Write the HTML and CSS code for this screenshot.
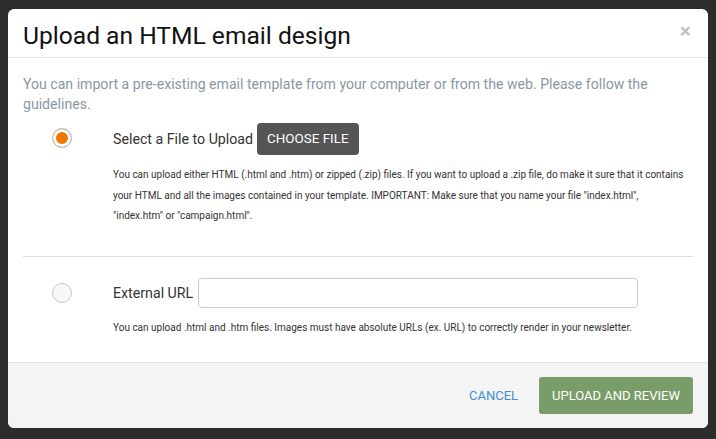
FILE: index.html
```html
<!DOCTYPE html>
<html>
<head>
<meta charset="utf-8">
<link rel="stylesheet" href="styles.css">
</head>
<body>
<div class="modal">
  <div class="modal-header">
    <h1 class="title">Upload an HTML email design</h1>
    <span class="close">×</span>
  </div>
  <div class="modal-body">
    <p class="intro">You can import a pre-existing email template from your computer or from the web. Please follow the guidelines.</p>
    <div class="option">
      <span class="radio checked"></span>
      <div class="option-main">
        <div class="option-row">
          <span class="label">Select a File to Upload</span>
          <span class="btn-dark">CHOOSE FILE</span>
        </div>
        <p class="help">You can upload either HTML (.html and .htm) or zipped (.zip) files. If you want to upload a .zip file, do make it sure that it contains your HTML and all the images contained in your template. IMPORTANT: Make sure that you name your file "index.html", <span class="nowrap">"index.htm" or "campaign.html".</span></p>
      </div>
    </div>
    <hr class="divider">
    <div class="option">
      <span class="radio"></span>
      <div class="option-main">
        <div class="option-row">
          <span class="label">External URL</span>
          <input class="url" type="text">
        </div>
        <p class="help">You can upload .html and .htm files. Images must have absolute URLs (ex. URL) to correctly render in your newsletter.</p>
      </div>
    </div>
  </div>
  <div class="modal-footer">
    <span class="cancel">CANCEL</span>
    <span class="btn-green">UPLOAD AND REVIEW</span>
  </div>
</div>
</body>
</html>
```

FILE: styles.css
```css
html, body {
  margin: 0;
  padding: 0;
}
body {
  background: #2c2c2c;
  font-family: Roboto, "Liberation Sans", sans-serif;
  color: #333;
  height: 439px;
  overflow: hidden;
}
.modal {
  margin: 9px 8px 0 8px;
  width: 700px;
  background: #fff;
  border-radius: 6px;
  overflow: hidden;
}
.modal-header {
  display: flex;
  justify-content: space-between;
  align-items: flex-start;
  padding: 14px 15px 8px 15px;
  border-bottom: 1px solid #e5e5e5;
}
.title {
  margin: 0;
  font-size: 24.6px;
  line-height: 26px;
  font-weight: 400;
  color: #111;
}
.close {
  font-size: 21px;
  font-weight: 700;
  line-height: 20px;
  color: #c4c4c4;
  margin-top: -2px;
  margin-right: 2px;
}
.modal-body {
  padding: 16px 15px 24px 15px;
}
.intro {
  margin: 0 0 9px 0;
  font-size: 14.1px;
  line-height: 20px;
  color: #8a97a3;
}
.option {
  display: grid;
  grid-template-columns: 90px 1fr;
}
.radio {
  margin-left: 29px;
  width: 18px;
  height: 18px;
  border: 1px solid #c9c9c9;
  border-radius: 50%;
  background: #f7f7f7;
  align-self: start;
  margin-top: 5px;
  box-sizing: content-box;
}
.radio.checked {
  background: #f27500;
  border-color: #b9c1cc;
  box-shadow: inset 0 0 0 3px #fff;
}
.option-row {
  display: flex;
  align-items: center;
  gap: 4px;
}
.label {
  font-size: 14.2px;
  color: #333;
}
.btn-dark {
  display: inline-block;
  background: #555;
  color: #fff;
  font-size: 13.4px;
  line-height: 32px;
  height: 32px;
  padding: 0 10px;
  border-radius: 4px;
}
.help {
  margin: 10px 0 0 0;
  font-size: 10px;
  line-height: 20.5px;
  color: #333;
}
.nowrap {
  white-space: nowrap;
}
.divider {
  border: 0;
  border-top: 1px solid #ddd;
  margin: 29px 0 21px 0;
}
.url {
  width: 440px;
  height: 30px;
  box-sizing: border-box;
  border: 1px solid #ccc;
  border-radius: 4px;
  margin: 0 0 0 1px;
}
.modal-footer {
  display: flex;
  justify-content: flex-end;
  align-items: center;
  gap: 21px;
  padding: 14px 15px 14px 15px;
  background: #f4f4f4;
  border-top: 1px solid #e2e2e2;
}
.cancel {
  color: #3f8fd6;
  font-size: 13px;
}
.btn-green {
  display: inline-block;
  background: #799d69;
  color: #fff;
  font-size: 13px;
  height: 37px;
  line-height: 37px;
  padding: 0 13px;
  border-radius: 3px;
}
```
